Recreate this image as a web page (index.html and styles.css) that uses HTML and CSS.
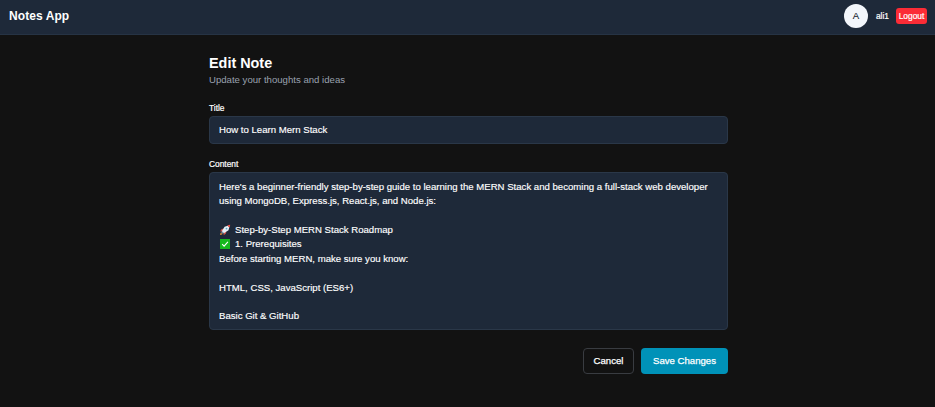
FILE: index.html
```html
<!DOCTYPE html>
<html lang="en">
<head>
<meta charset="utf-8">
<title>Notes App</title>
<link rel="stylesheet" href="styles.css">
</head>
<body>
<header class="navbar">
  <div class="brand"><span>Notes App</span></div>
  <div class="account">
    <div class="avatar">A</div>
    <span class="username">ali1</span>
    <button class="logout" type="button">Logout</button>
  </div>
</header>
<main class="page">
  <h1 class="heading"><span>Edit Note</span></h1>
  <p class="subtitle"><span>Update your thoughts and ideas</span></p>
  <div class="label"><span>Title</span></div>
  <div class="field field-title"><span>How to Learn Mern Stack</span></div>
  <div class="label label-content"><span>Content</span></div>
  <div class="field field-content">
    <p class="line"><span>Here's a beginner-friendly step-by-step guide to learning the MERN Stack and becoming a full-stack web developer</span></p>
    <p class="line"><span>using MongoDB, Express.js, React.js, and Node.js:</span></p>
    <p class="line"></p>
    <p class="line"><svg class="emoji" viewBox="0 0 12 12" aria-hidden="true"><path d="M1 11 1.8 8.6 3.4 10.2Z" fill="#ff9d35"/><path d="M4.5 4.6 2.4 5.2 1 7.6l2.7-.4ZM7.4 7.5 6.8 9.8 4.6 11.2l.2-2.8Z" fill="#c8504a"/><path d="M2.8 7.2 5.6 2.8 8.8 1.7 10.3 3.2 9.5 6.2 4.9 9.3Z" fill="#e6f0f6"/><path d="M8.4 1.6Q9.5.9 11.2.8 11.1 2.5 10.4 3.6Z" fill="#ef5147"/><path d="M2.8 7.2 4.9 9.3 3.6 9.8 2.2 8.4Z" fill="#8394a3"/><circle cx="7.5" cy="4.6" r=".9" fill="#58a5cc"/></svg><span>Step-by-Step MERN Stack Roadmap</span></p>
    <p class="line"><svg class="emoji" viewBox="0 0 12 12" aria-hidden="true"><rect x="1" y="1" width="10" height="10" fill="#16b81e"/><path d="M3.2 6.2 5.1 8.1 8.9 3.9" fill="none" stroke="#fff" stroke-width="1.1"/></svg><span>1. Prerequisites</span></p>
    <p class="line"><span>Before starting MERN, make sure you know:</span></p>
    <p class="line"></p>
    <p class="line"><span>HTML, CSS, JavaScript (ES6+)</span></p>
    <p class="line"></p>
    <p class="line"><span>Basic Git &amp; GitHub</span></p>
  </div>
  <div class="actions">
    <button class="button cancel" type="button">Cancel</button>
    <button class="button save" type="button">Save Changes</button>
  </div>
</main>
</body>
</html>
```
FILE: styles.css
```css
* { box-sizing: border-box; }

body {
  margin: 0;
  min-height: 407px;
  background: #121212;
  color: #fff;
  font-family: "Liberation Sans", Arial, sans-serif;
  font-size: 9.6px;
}

h1, p { margin: 0; }
button { font-family: inherit; padding: 0; color: #fff; white-space: nowrap; }

.navbar {
  display: flex;
  align-items: center;
  justify-content: space-between;
  height: 35px;
  padding: 0 8px 3px 9px;
  background: #1e2939;
  border-bottom: 1px solid #263344;
}

.brand { font-size: 12px; font-weight: 700; line-height: 16px; letter-spacing: 0.08px; }
.account { display: flex; align-items: center; }

.avatar {
  width: 24px;
  height: 24px;
  margin-right: 8px;
  border-radius: 50%;
  background: #f3f6fb;
  color: #101828;
  font-size: 9.6px;
  line-height: 24px;
  text-align: center;
  -webkit-text-stroke: 0.1px #101828;
}

.username { margin-right: 7px; font-size: 8.4px; -webkit-text-stroke: 0.2px #fff; }

.logout {
  width: 31px;
  height: 16px;
  border: 0;
  border-radius: 3px;
  background: #fb2c36;
  font-size: 8.4px;
  -webkit-text-stroke: 0.2px #fff;
}

.page { width: 519px; margin: 19px 0 0 209px; }
.heading { font-size: 14.4px; line-height: 18px; }
.subtitle { padding-top: 1px; color: #99a1af; line-height: 14px; }
.label { margin-top: 15px; font-size: 8.4px; line-height: 12px; -webkit-text-stroke: 0.2px #fff; }
.label-content { margin-top: 14px; }

.field {
  background: #1e2939;
  border: 1px solid #2a3748;
  border-radius: 4px;
  padding: 0 9px;
}

.field-title { height: 28px; margin-top: 2px; line-height: 26px; -webkit-text-stroke: 0.15px #fff; }
.field-content { height: 158px; margin-top: 2px; padding-top: 7px; -webkit-text-stroke: 0.15px #fff; }
.line { display: flex; align-items: center; height: 14.36px; line-height: 14.36px; white-space: nowrap; }
.emoji { width: 12px; height: 12px; margin: -1px 4px 0 0; -webkit-text-stroke: 0; }

.actions { display: flex; justify-content: flex-end; gap: 7px; margin-top: 18px; }
.button { height: 26px; padding-bottom: 1px; border-radius: 4px; font-size: 9.6px; -webkit-text-stroke: 0.25px #fff; }
.cancel { width: 51px; background: #121212; border: 1px solid #393c41; }
.save { width: 87px; background: #0092b8; border: 0; }
```
